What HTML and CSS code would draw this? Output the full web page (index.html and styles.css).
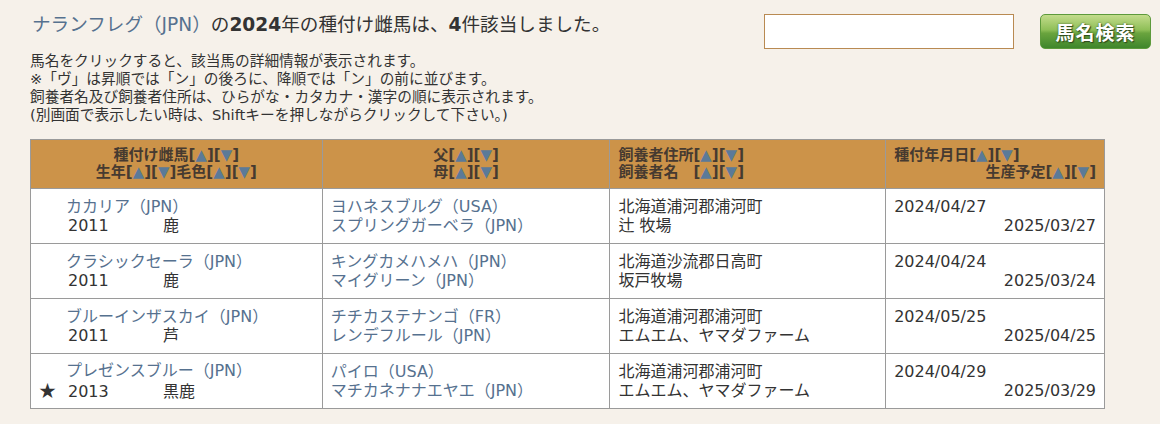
FILE: index.html
```html
<!DOCTYPE html>
<html lang="ja">
<head>
    <meta charset="UTF-8">
    <title>種付け雌馬一覧</title>
    <link rel="stylesheet" href="styles.css">
</head>
<body>
    <div class="page">
        <div class="top">
            <h1 class="summary"><a href="#" class="horse">ナランフレグ（JPN）</a>の<b>2024</b>年の種付け雌馬は、<b>4</b>件該当しました。</h1>
            <form class="search" onsubmit="return false;">
                <input type="text" class="search-box">
                <button type="submit" class="search-btn">馬名検索</button>
            </form>
        </div>
        <div class="notes">
            <p>馬名をクリックすると、該当馬の詳細情報が表示されます。</p>
            <p>※「ヴ」は昇順では「ン」の後ろに、降順では「ン」の前に並びます。</p>
            <p>飼養者名及び飼養者住所は、ひらがな・カタカナ・漢字の順に表示されます。</p>
            <p>(別画面で表示したい時は、Shiftキーを押しながらクリックして下さい。)</p>
        </div>
        <table class="list">
            <colgroup>
                <col class="c1"><col class="c2"><col class="c3"><col class="c4">
            </colgroup>
            <thead>
                <tr>
                    <th class="center">種付け雌馬[<a href="#">▲</a>][<a href="#">▼</a>]<br>生年[<a href="#">▲</a>][<a href="#">▼</a>]毛色[<a href="#">▲</a>][<a href="#">▼</a>]</th>
                    <th class="center">父[<a href="#">▲</a>][<a href="#">▼</a>]<br>母[<a href="#">▲</a>][<a href="#">▼</a>]</th>
                    <th>飼養者住所[<a href="#">▲</a>][<a href="#">▼</a>]<br>飼養者名　[<a href="#">▲</a>][<a href="#">▼</a>]</th>
                    <th>種付年月日[<a href="#">▲</a>][<a href="#">▼</a>]<div class="right">生産予定[<a href="#">▲</a>][<a href="#">▼</a>]</div></th>
                </tr>
            </thead>
            <tbody>
                <tr>
                    <td><a href="#" class="name">カカリア（JPN）</a><br><span class="mark"></span><span class="year">2011</span>鹿</td>
                    <td><a href="#">ヨハネスブルグ（USA）</a><br><a href="#">スプリングガーベラ（JPN）</a></td>
                    <td>北海道浦河郡浦河町<br>辻 牧場</td>
                    <td>2024/04/27<div class="right">2025/03/27</div></td>
                </tr>
                <tr>
                    <td><a href="#" class="name">クラシックセーラ（JPN）</a><br><span class="mark"></span><span class="year">2011</span>鹿</td>
                    <td><a href="#">キングカメハメハ（JPN）</a><br><a href="#">マイグリーン（JPN）</a></td>
                    <td>北海道沙流郡日高町<br>坂戸牧場</td>
                    <td>2024/04/24<div class="right">2025/03/24</div></td>
                </tr>
                <tr>
                    <td><a href="#" class="name">ブルーインザスカイ（JPN）</a><br><span class="mark"></span><span class="year">2011</span>芦</td>
                    <td><a href="#">チチカステナンゴ（FR）</a><br><a href="#">レンデフルール（JPN）</a></td>
                    <td>北海道浦河郡浦河町<br>エムエム、ヤマダファーム</td>
                    <td>2024/05/25<div class="right">2025/04/25</div></td>
                </tr>
                <tr>
                    <td><a href="#" class="name">プレゼンスブルー（JPN）</a><br><span class="mark">★</span><span class="year">2013</span>黒鹿</td>
                    <td><a href="#">パイロ（USA）</a><br><a href="#">マチカネナナエヤエ（JPN）</a></td>
                    <td>北海道浦河郡浦河町<br>エムエム、ヤマダファーム</td>
                    <td>2024/04/29<div class="right">2025/03/29</div></td>
                </tr>
            </tbody>
        </table>
    </div>
</body>
</html>
```

FILE: styles.css
```css
body {
    margin: 0;
    background: #f6f1ea;
    color: #333333;
    font-family: "DejaVu Sans", "Noto Sans CJK JP", sans-serif;
    font-size: 16px;
}
a {
    color: #56718f;
    text-decoration: none;
}
.page {
    padding: 0 9px 0 30px;
}
.top {
    display: flex;
    align-items: flex-start;
    padding-top: 13px;
}
.summary {
    margin: 0 0 0 2px;
    font-size: 18.6px;
    font-weight: normal;
    line-height: 24px;
    flex: 1;
}
.summary b {
    font-weight: bold;
}
.search {
    display: flex;
    margin-top: 1px;
}
.search-box {
    width: 250px;
    height: 35px;
    margin: 0 26px 0 0;
    padding: 0 4px;
    border: 1px solid #b98a52;
    background: #ffffff;
    box-sizing: border-box;
}
.search-btn {
    width: 111px;
    height: 35px;
    border: 1px solid #5d9a3c;
    border-radius: 5px;
    background: linear-gradient(#c3dc8c, #8fbf58 45%, #6aa43e 55%, #3f862c);
    color: #ffffff;
    font-family: "Noto Sans CJK JP", sans-serif;
    font-size: 19px;
    font-weight: bold;
    letter-spacing: 1px;
    text-shadow: 1px 1px 1px #2c4a1c, 0 0 2px #3a5a28;
    cursor: pointer;
    padding: 0;
}
.notes {
    margin-top: 3px;
    font-size: 14.7px;
    line-height: 18px;
}
.notes p {
    margin: 0;
}
.list {
    margin-top: 15px;
    width: 1075px;
    border-collapse: collapse;
    background: #ffffff;
}
.list col.c1 { width: 292px; }
.list col.c2 { width: 288px; }
.list col.c3 { width: 276px; }
.list col.c4 { width: 219px; }
.list th {
    background: #cc9349;
    color: #463a30;
    font-size: 15px;
    line-height: 17px;
    text-align: left;
    padding: 0 8px;
    height: 48px;
    border: 1px solid #9a9a9a;
}
.list th a {
    color: #5b7a98;
}
.list th.center {
    text-align: center;
}
.list td {
    border: 1px solid #9a9a9a;
    padding: 0 8px;
    line-height: 19px;
    height: 54px;
    vertical-align: middle;
}
.right {
    text-align: right;
}
.name {
    margin-left: 27px;
}
.mark {
    display: inline-block;
    width: 29px;
    font-family: "Noto Sans CJK JP", sans-serif;
    font-size: 17px;
    color: #333333;
}
.year {
    display: inline-block;
    width: 95px;
}
```
